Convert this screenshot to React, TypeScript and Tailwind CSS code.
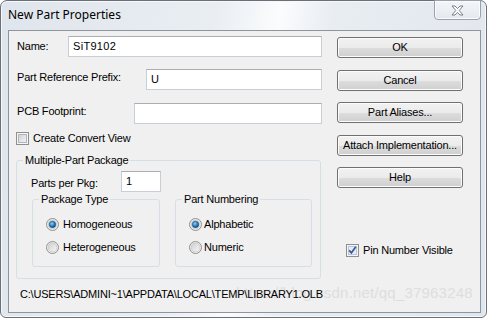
import React from "react";

const ui = { fontFamily: '"Liberation Sans", Arial, sans-serif', fontSize: "11px", letterSpacing: "-0.2px" };

function Radio({ checked }: { checked?: boolean }) {
  return (
    <svg width="13" height="13" viewBox="0 0 13 13" className="shrink-0">
      <defs>
        <linearGradient id="rf" x1="0" y1="0" x2="1" y2="1">
          <stop offset="0" stopColor="#cfcfcf" />
          <stop offset="1" stopColor="#f7f7f7" />
        </linearGradient>
        <radialGradient id="rd" cx="0.4" cy="0.35" r="0.7">
          <stop offset="0" stopColor="#8fd3f7" />
          <stop offset="0.5" stopColor="#2b8ad0" />
          <stop offset="1" stopColor="#0d3d6b" />
        </radialGradient>
      </defs>
      <circle cx="6.5" cy="6.5" r="6" fill="#f4f4f4" stroke="#8f8f8f" />
      <circle cx="6.5" cy="6.5" r="4.5" fill="url(#rf)" stroke="#c4c4c4" strokeWidth="0.8" />
      {checked && <circle cx="6.5" cy="6.5" r="3.2" fill="url(#rd)" stroke="#1a4a7a" strokeWidth="0.6" />}
    </svg>
  );
}

function Check({ checked }: { checked?: boolean }) {
  return (
    <svg width="13" height="13" viewBox="0 0 13 13" className="shrink-0">
      <defs>
        <linearGradient id="cf" x1="0" y1="0" x2="1" y2="1">
          <stop offset="0" stopColor="#cbcfd5" />
          <stop offset="1" stopColor="#f4f5f7" />
        </linearGradient>
      </defs>
      <rect x="0.5" y="0.5" width="12" height="12" fill="#f5f5f5" stroke="#8e8f8f" />
      <rect x="2.5" y="2.5" width="8" height="8" fill={checked ? "#e3ecf7" : "url(#cf)"} stroke={checked ? "#b8c8dc" : "#b3b6bb"} />
      {checked && <path d="M3.2 6.4 L5.4 8.8 L9.8 2.8" fill="none" stroke="#3d5a98" strokeWidth="1.7" />}
    </svg>
  );
}

function Btn({ label, className = "" }: { label: string; className?: string }) {
  return (
    <div
      className={`h-[21px] w-[126px] rounded-[3px] border border-[#707070] bg-[linear-gradient(#f2f2f2_0%,#ebebeb_50%,#dddddd_51%,#cfcfcf_100%)] shadow-[inset_0_0_0_1px_#fcfcfc] flex items-center justify-center text-black ${className}`}
    >
      {label}
    </div>
  );
}

function Field({ value = "", className = "" }: { value?: string; className?: string }) {
  return (
    <div
      className={`h-[21px] bg-white border border-[#c8ced6] border-t-[#abadb3] flex items-center pl-[4px] text-black ${className}`}
    >
      {value}
    </div>
  );
}

function Group({ title, className = "", children }: { title: string; className?: string; children?: React.ReactNode }) {
  return (
    <div className={`relative rounded-[3px] border border-[#d5dfe5] ${className}`}>
      <span className="absolute -top-[8px] left-[6px] bg-[#f0f0f0] px-[2px] leading-[14px]">{title}</span>
      {children}
    </div>
  );
}

export default function App() {
  return (
    <div className="w-[489px] h-[318px] bg-white relative overflow-hidden" style={ui}>
      <div className="w-[487px] h-[318px] rounded-t-[7px] rounded-b-[6px] border border-[#6b6f76] bg-[linear-gradient(100deg,#dfe5ec_0%,#e9eef3_40%,#fbfcfd_52%,#e8edf2_62%,#e0e6ed_100%)] shadow-[inset_0_0_0_1px_#f6f8fb] flex flex-col">
        {/* title bar */}
        <div className="h-[29px] flex items-start relative">
          <span
            className="ml-[7px] mt-[5px] text-black tracking-normal"
            style={{ fontFamily: '"Segoe UI", "Noto Sans", sans-serif', fontSize: "12px" }}
          >
            New Part Properties
          </span>
          <div className="ml-auto mr-[5px] -mt-[1px] w-[47px] h-[20px] rounded-b-[4px] border border-[#9aa1ab] bg-[linear-gradient(#f4f6f9,#e4e8ee)] shadow-[inset_0_0_0_1px_#fbfcfd] flex items-center justify-center">
            <svg width="13" height="11" viewBox="0 0 13 11">
              <path
                d="M1 1 H4 L6.5 3.6 L9 1 H12 L8.2 5.5 L12 10 H9 L6.5 7.4 L4 10 H1 L4.8 5.5 Z"
                fill="#ffffff"
                stroke="#6f737a"
                strokeWidth="0.9"
                strokeLinejoin="round"
              />
            </svg>
          </div>
        </div>

        {/* client area */}
        <div className="ml-[7px] mr-[5px] h-[283px] border border-[#8f959e] bg-[#f0f0f0] flex flex-col">
          <div className="flex">
            {/* left column */}
            <div className="w-[306px] ml-[7px] mt-[5px] flex flex-col">
              <div className="flex items-center h-[21px]">
                <span className="ml-[1px] w-[51px]">Name:</span>
                <Field value="SiT9102" className="w-[254px] tracking-[0.3px]" />
              </div>
              <div className="flex items-center h-[21px] mt-[12px]">
                <span className="ml-[1px] w-[129px] -mt-[4px]">Part Reference Prefix:</span>
                <Field value="U" className="w-[176px]" />
              </div>
              <div className="flex items-center h-[21px] mt-[13px]">
                <span className="ml-[1px] w-[117px] -mt-[4px]">PCB Footprint:</span>
                <Field className="w-[188px]" />
              </div>
              <div className="flex items-center gap-[4px] mt-[7px] h-[14px]">
                <Check />
                <span>Create Convert View</span>
              </div>
              <Group title="Multiple-Part Package" className="mt-[15px] w-[305px] h-[119px]">
                <div className="flex items-center mt-[10px] ml-[14px] h-[21px]">
                  <span className="w-[90px] mt-[3px]">Parts per Pkg:</span>
                  <Field value="1" className="w-[40px]" />
                </div>
                <div className="flex mt-[7px] ml-[15px] gap-[15px]">
                  <Group title="Package Type" className="w-[128px] h-[68px]">
                    <div className="flex flex-col ml-[13px] mt-[18px] gap-[10px]">
                      <div className="flex items-center gap-[4px] h-[13px]">
                        <Radio checked />
                        <span>Homogeneous</span>
                      </div>
                      <div className="flex items-center gap-[4px] h-[13px]">
                        <Radio />
                        <span>Heterogeneous</span>
                      </div>
                    </div>
                  </Group>
                  <Group title="Part Numbering" className="w-[137px] h-[68px]">
                    <div className="flex flex-col ml-[13px] mt-[18px] gap-[10px]">
                      <div className="flex items-center gap-[2px] h-[13px]">
                        <Radio checked />
                        <span>Alphabetic</span>
                      </div>
                      <div className="flex items-center gap-[2px] h-[13px]">
                        <Radio />
                        <span>Numeric</span>
                      </div>
                    </div>
                  </Group>
                </div>
              </Group>
            </div>

            {/* right column */}
            <div className="ml-[15px] mt-[6px] flex flex-col">
              <Btn label="OK" />
              <Btn label="Cancel" className="mt-[12px]" />
              <Btn label="Part Aliases..." className="mt-[11px]" />
              <Btn label="Attach Implementation..." className="mt-[12px]" />
              <Btn label="Help" className="mt-[11px]" />
              <div className="flex items-center gap-[4px] ml-[9px] mt-[56px] h-[13px]">
                <Check checked />
                <span>Pin Number Visible</span>
              </div>
            </div>
          </div>

          <div className="relative z-10 ml-[11px] mt-[7px] text-black">C:\USERS\ADMINI~1\APPDATA\LOCAL\TEMP\LIBRARY1.OLB</div>
        </div>
      </div>

      {/* watermark */}
      <span
        className="absolute left-[236px] top-[282px] text-[#dedede] pointer-events-none"
        style={{ fontFamily: '"Liberation Sans", Arial, sans-serif', fontSize: "15px", letterSpacing: "0.2px" }}
      >
        https://blog.csdn.net/qq_37963248
      </span>
    </div>
  );
}
